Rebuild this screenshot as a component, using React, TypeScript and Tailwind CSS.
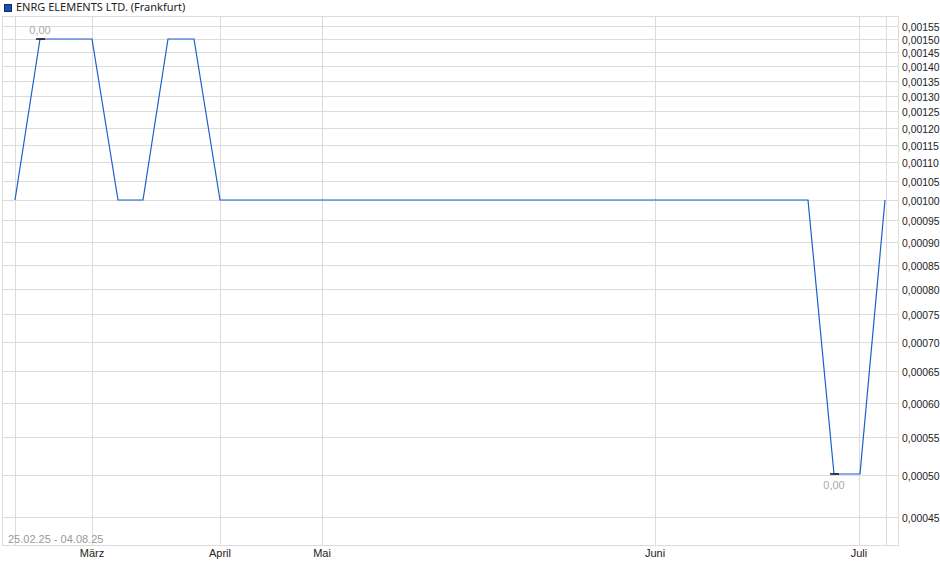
const yOf = (v: number) => 200 - 397 * Math.log(v / 0.001);

const ticks = Array.from({ length: 23 }, (_, i) => 0.00045 + i * 0.00005);
const vLines = [15, 92, 220, 322, 655, 859, 886];
const months = [
  { x: 92, label: 'März' },
  { x: 220, label: 'April' },
  { x: 322, label: 'Mai' },
  { x: 655, label: 'Juni' },
  { x: 859, label: 'Juli' },
];
const points: [number, number][] = [
  [15, 200], [40, 39], [92, 39], [118, 200], [143, 200], [168, 39], [194, 39],
  [220, 200], [808, 200], [834, 474], [860, 474], [885, 200],
];

export default function App() {
  return (
    <div className="relative w-[940px] h-[579px] bg-white font-['Liberation_Sans',Arial,sans-serif] overflow-hidden">
      <div className="flex items-center gap-1 pl-[4px] pt-[1px] text-[11px] text-[#222] h-[14px]">
        <span className="w-[8px] h-[8px] bg-[#1a4fa8] border border-[#0d2f70]" />
        <span>ENRG ELEMENTS LTD. (Frankfurt)</span>
      </div>
      <svg width={940} height={565} viewBox="0 14 940 565" className="block">
        {ticks.map((t) => {
          const y = Math.round(yOf(t)) + 0.5;
          return (
            <g key={t}>
              <line x1={3} x2={898} y1={y} y2={y} stroke="#dcdcdc" />
              <text x={902} y={y + 4} fontSize={10.4} fill="#222" fontFamily="Liberation Sans, Arial, sans-serif">
                {t.toFixed(5).replace('.', ',')}
              </text>
            </g>
          );
        })}
        {vLines.map((x) => (
          <line key={x} x1={x + 0.5} x2={x + 0.5} y1={16} y2={545} stroke="#dcdcdc" />
        ))}
        <rect x={2.5} y={16.5} width={896} height={529} fill="none" stroke="#dcdcdc" />
        {months.map((m) => (
          <text key={m.label} x={m.x} y={557} fontSize={11} fill="#222" textAnchor="middle" fontFamily="Liberation Sans, Arial, sans-serif">
            {m.label}
          </text>
        ))}
        <text x={8} y={543} fontSize={11} fill="#999" fontFamily="Liberation Sans, Arial, sans-serif">25.02.25 - 04.08.25</text>
        <polyline points={points.map((p) => p.join(',')).join(' ')} fill="none" stroke="#1a5fcf" strokeWidth={1.2} />
        <line x1={36} x2={45} y1={39} y2={39} stroke="#111" strokeWidth={1.5} />
        <line x1={830} x2={839} y1={474} y2={474} stroke="#111" strokeWidth={1.5} />
        <text x={40} y={34} fontSize={11} fill="#aaa" textAnchor="middle" fontFamily="Liberation Sans, Arial, sans-serif">0,00</text>
        <text x={834} y={489} fontSize={11} fill="#aaa" textAnchor="middle" fontFamily="Liberation Sans, Arial, sans-serif">0,00</text>
      </svg>
    </div>
  );
}
